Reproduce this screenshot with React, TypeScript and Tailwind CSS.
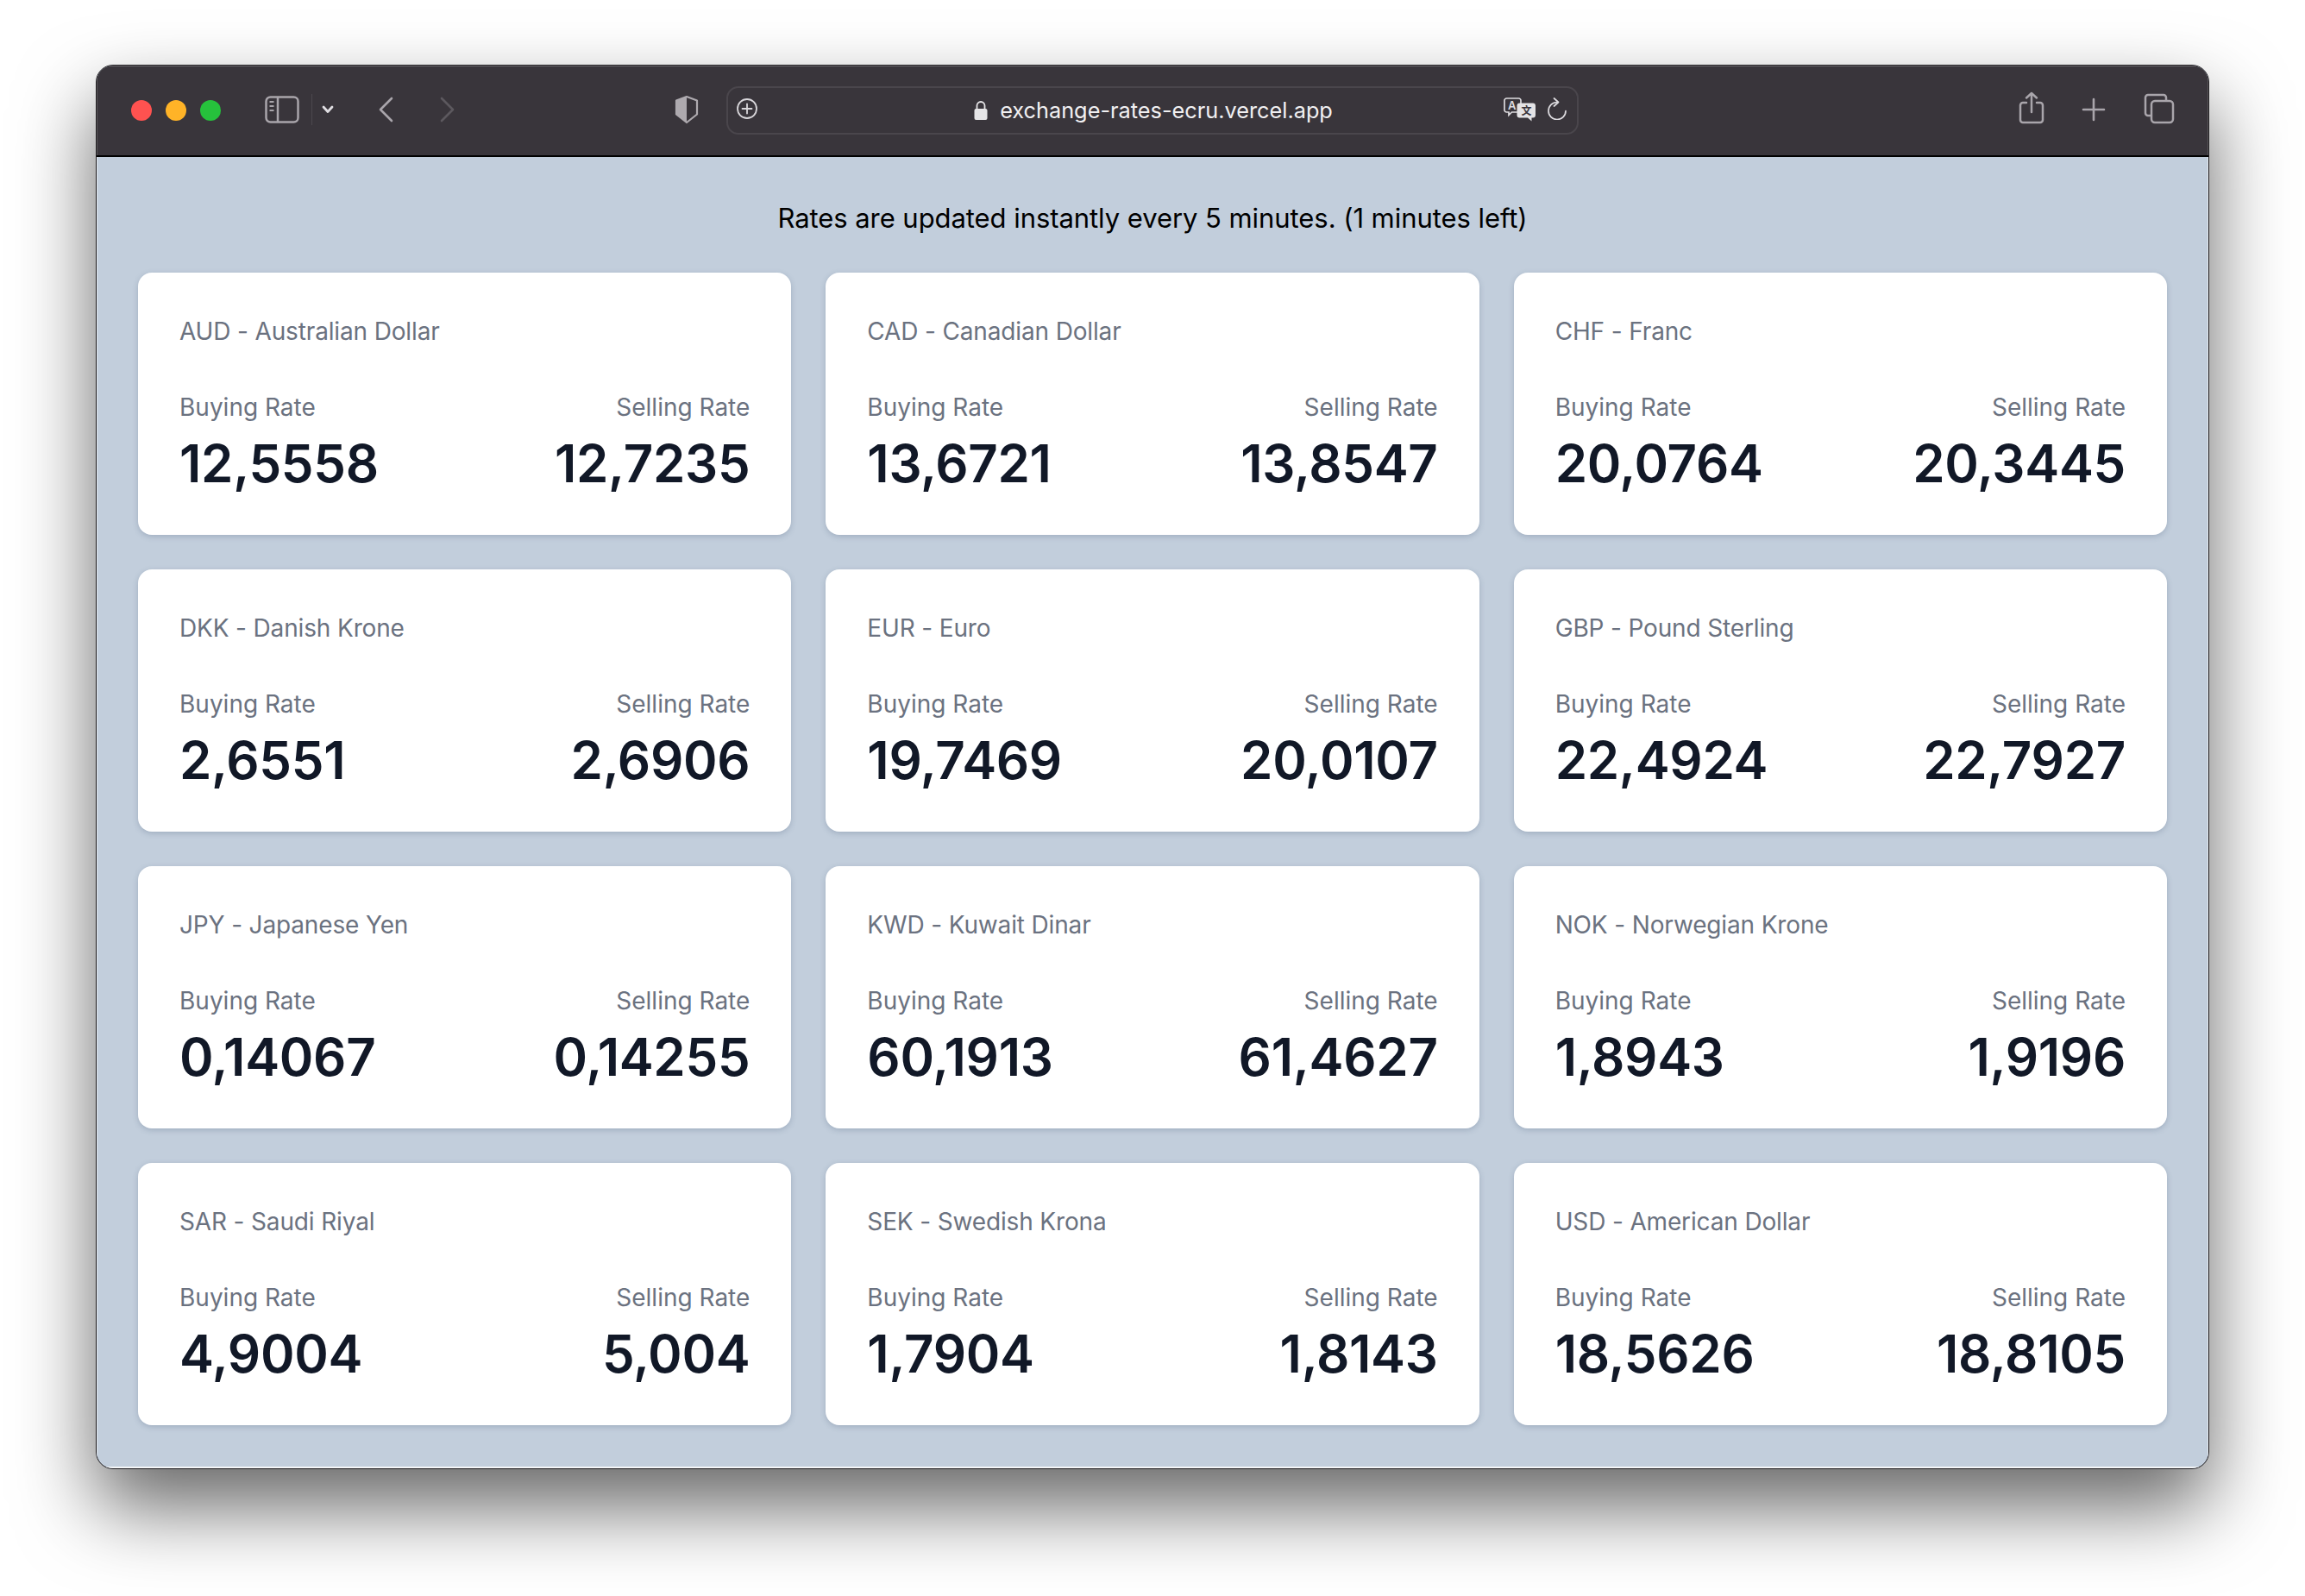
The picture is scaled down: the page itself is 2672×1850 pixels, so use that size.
const rates = [
  ["AUD - Australian Dollar", "12,5558", "12,7235"],
  ["CAD - Canadian Dollar", "13,6721", "13,8547"],
  ["CHF - Franc", "20,0764", "20,3445"],
  ["DKK - Danish Krone", "2,6551", "2,6906"],
  ["EUR - Euro", "19,7469", "20,0107"],
  ["GBP - Pound Sterling", "22,4924", "22,7927"],
  ["JPY - Japanese Yen", "0,14067", "0,14255"],
  ["KWD - Kuwait Dinar", "60,1913", "61,4627"],
  ["NOK - Norwegian Krone", "1,8943", "1,9196"],
  ["SAR - Saudi Riyal", "4,9004", "5,004"],
  ["SEK - Swedish Krona", "1,7904", "1,8143"],
  ["USD - American Dollar", "18,5626", "18,8105"],
];

function Card({ name, buy, sell }: { name: string; buy: string; sell: string }) {
  return (
    <div className="h-[304px] rounded-[16px] bg-white px-[48px] pt-[48px] shadow-[0_2px_6px_rgba(60,80,110,0.25)]">
      <div className="text-[28px] leading-[40px] tracking-[-0.15px] text-[#6b7280]">{name}</div>
      <div className="mt-[48px] flex justify-between">
        <div>
          <div className="text-[28px] leading-[40px] text-[#6b7280]">Buying Rate</div>
          <div className="mt-[15px] text-[60px] leading-[60px] font-semibold tracking-[-0.3px] text-[#111827]">{buy}</div>
        </div>
        <div className="text-right">
          <div className="text-[28px] leading-[40px] text-[#6b7280]">Selling Rate</div>
          <div className="mt-[15px] text-[60px] leading-[60px] font-semibold tracking-[-0.3px] text-[#111827]">{sell}</div>
        </div>
      </div>
    </div>
  );
}

function Toolbar() {
  return (
    <div className="flex h-[106px] items-center border-b-2 border-black bg-[#39353b] shadow-[inset_0_1px_0_#6f6c71,inset_1px_0_0_#5a575b,inset_-1px_0_0_#5a575b]">
      <div className="ml-[40px] flex gap-[16px]">
        <div className="h-[24px] w-[24px] rounded-full bg-[#ff5250]" />
        <div className="h-[24px] w-[24px] rounded-full bg-[#ffb327]" />
        <div className="h-[24px] w-[24px] rounded-full bg-[#26c13c]" />
      </div>
      <svg className="mb-[2px] ml-[51px]" width="40" height="32" viewBox="0 0 40 32" fill="none" stroke="#a9a5ab" strokeWidth="2.5">
        <rect x="1.5" y="1.500" width="37" height="29" rx="5" />
        <path d="M15 1.500v29" />
        <path d="M5.500 7h5M5.500 12h5M5.500 17h5" strokeWidth="1.800" />
      </svg>
      <div className="mb-[2px] ml-[14px] h-[36px] w-[1px] bg-[#4c484e]" />
      <svg className="mb-[2px] ml-[11px]" width="14" height="10" viewBox="0 0 14 10" fill="none" stroke="#e0dee2" strokeWidth="2.8" strokeLinecap="round" strokeLinejoin="round">
        <path d="M2 2l5 5.500L12 2" />
      </svg>
      <svg className="mb-[2px] ml-[51px]" width="18" height="30" viewBox="0 0 18 30" fill="none" stroke="#a9a5ab" strokeWidth="2.6" strokeLinecap="round" strokeLinejoin="round">
        <path d="M16 2L3 15l13 13" />
      </svg>
      <svg className="mb-[2px] ml-[54px]" width="18" height="30" viewBox="0 0 18 30" fill="none" stroke="#5c585e" strokeWidth="2.6" strokeLinecap="round" strokeLinejoin="round">
        <path d="M2 2l13 13L2 28" />
      </svg>
      <svg className="mb-[2px] ml-[254px]" width="28" height="34" viewBox="0 0 28 34" fill="none">
        <path d="M14 2L26 6.500v16L14 32 2 22.500v-16z" stroke="#aeaaaf" strokeWidth="2.200" strokeLinejoin="round" />
        <path d="M14 2L2 6.500v16L14 32z" fill="#aeaaaf" />
      </svg>
      <div className="relative mb-[1px] ml-[32px] flex h-[56px] w-[988px] items-center justify-center rounded-[14px] border-2 border-[#4a464c] pl-[2px]">
        <svg className="absolute left-[8px] top-[10px]" width="28" height="28" viewBox="0 0 28 28" fill="none" stroke="#d8d6da" strokeWidth="1.800">
          <circle cx="14" cy="14" r="11" />
          <path d="M14 8.500v11M8.500 14h11" strokeLinecap="round" />
        </svg>
        <svg className="mr-[14px]" width="16" height="24" viewBox="0 0 16 24" fill="none">
          <path d="M3.500 11V6.500a4.500 4.500 0 0 1 9 0V11" stroke="#e6e5e7" strokeWidth="1.800" />
          <rect x="0.500" y="10" width="15" height="13" rx="2" fill="#e6e5e7" />
        </svg>
        <span className="text-[25.300px] leading-[32px] text-[#f1f0f2]">exchange-rates-ecru.vercel.app</span>
        <svg className="absolute right-[48px] top-[11px]" width="37" height="28" viewBox="0 0 37 28" fill="none">
          <path d="M3.500 1h14a2.500 2.500 0 0 1 2.500 2.500v11a2.500 2.500 0 0 1-2.500 2.500H9.500l-3.500 3.500V17H3.500A2.500 2.500 0 0 1 1 14.500v-11A2.500 2.500 0 0 1 3.500 1z" stroke="#dddbdf" strokeWidth="1.700" />
          <text x="5" y="14" fontSize="13" fontWeight="600" fontFamily="Inter, sans-serif" fill="#dddbdf">A</text>
          <path d="M18.500 6.500h15.500a3 3 0 0 1 3 3v11a3 3 0 0 1-3 3h-1.500v4l-4.500-4h-9.500a3 3 0 0 1-3-3v-11a3 3 0 0 1 3-3z" fill="#e4e3e5" />
          <text x="20.500" y="20" fontSize="12" fontWeight="700" fontFamily="'Noto Sans CJK SC', sans-serif" fill="#39353b">文</text>
        </svg>
        <svg className="absolute right-[11px] top-[11px]" width="24" height="26" viewBox="0 0 24 26" fill="none" stroke="#dddbdf" strokeWidth="1.700" strokeLinecap="round" strokeLinejoin="round">
          <path d="M12 5.500A10 10 0 1 0 22 15.500" />
          <path d="M8.500 1l5 4.500-5 4.500" />
        </svg>
      </div>
      <svg className="mb-[6px] ml-[510px]" width="30" height="38" viewBox="0 0 30 38" fill="none" stroke="#a9a5ab" strokeWidth="2.500" strokeLinecap="round" strokeLinejoin="round">
        <path d="M9 13H5a3 3 0 0 0-3 3v17a3 3 0 0 0 3 3h20a3 3 0 0 0 3-3V16a3 3 0 0 0-3-3h-4" />
        <path d="M15 24V2M9 7.500L15 2l6 5.500" />
      </svg>
      <svg className="mb-[3px] ml-[43px]" width="28" height="28" viewBox="0 0 28 28" fill="none" stroke="#a9a5ab" strokeWidth="2.600" strokeLinecap="round">
        <path d="M14 2v24M2 14h24" />
      </svg>
      <svg className="mb-[4px] ml-[44px]" width="36" height="36" viewBox="0 0 36 36" fill="none" stroke="#a9a5ab" strokeWidth="2.500" strokeLinejoin="round">
        <path d="M9 26H5a3 3 0 0 1-3-3V5a3 3 0 0 1 3-3h18a3 3 0 0 1 3 3v4" />
        <rect x="9" y="9" width="25" height="25" rx="4" />
      </svg>
    </div>
  );
}

export default function App() {
  return (
    <div className="h-[1850px] w-[2672px] overflow-hidden bg-white pt-[75px] pl-[111px] font-['Inter',sans-serif]">
      <div className="h-[1628px] w-[2450px] overflow-hidden rounded-[20px] border border-[#1d1b1e] bg-[#c2cedc] shadow-[0_44px_90px_rgba(0,0,0,0.6)]">
        <Toolbar />
        <div className="h-[1520px] px-[48px] shadow-[inset_1px_0_0_#e4e9ef,inset_-1px_0_0_#e4e9ef,inset_0_-2px_0_#f4f6f8]">
          <div className="pt-[51px] text-center text-[31px] leading-[40px] tracking-[-0.06px] text-black">
            Rates are updated instantly every 5 minutes. (1 minutes left)
          </div>
          <div className="mt-[43px] grid grid-cols-3 gap-[40px]">
            {rates.map((r) => (
              <Card key={r[0]} name={r[0]} buy={r[1]} sell={r[2]} />
            ))}
          </div>
        </div>
      </div>
    </div>
  );
}
